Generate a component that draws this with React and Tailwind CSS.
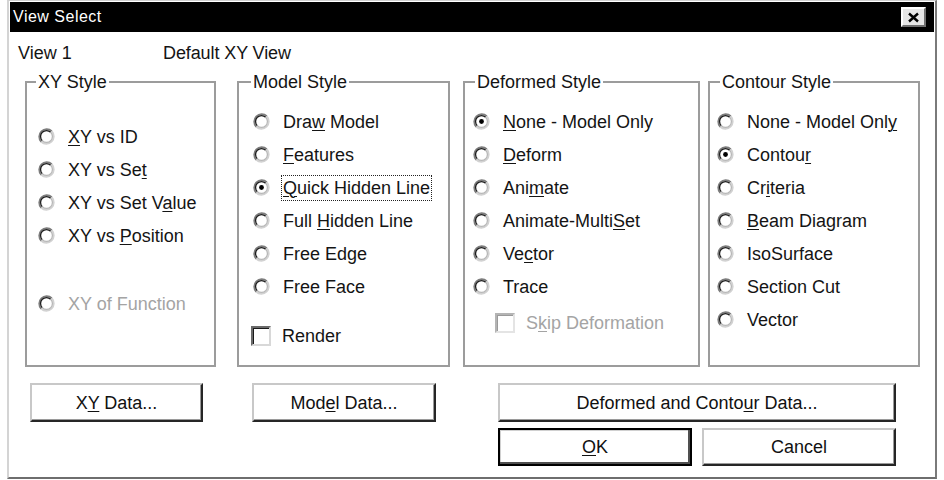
import React from "react";

/* ---------- small pieces ---------- */

// "&" marks the mnemonic letter, drawn underlined
function Mn({ text }) {
  const i = text.indexOf("&");
  if (i < 0) return <span>{text}</span>;
  return (
    <span className="whitespace-pre">
      {text.slice(0, i)}
      <u className="underline-offset-[2px] decoration-1">{text[i + 1]}</u>
      {text.slice(i + 2)}
    </span>
  );
}

function Radio({ checked }) {
  return (
    <svg width="17" height="17" viewBox="0 0 17 17" className="shrink-0">
      <circle cx="8.5" cy="8.5" r="7.5" fill="#fff" />
      <path d="M3.2 13.8A7.5 7.5 0 0 1 13.8 3.2" fill="none" stroke="#7c7c7c" strokeWidth="1.7" />
      <path d="M13.8 3.2A7.5 7.5 0 0 1 3.2 13.8" fill="none" stroke="#d2d2d2" strokeWidth="1.7" />
      <path d="M4.3 12.7A5.9 5.9 0 0 1 12.7 4.3" fill="none" stroke="#1c1c1c" strokeWidth="1.3" />
      <path d="M12.7 4.3A5.9 5.9 0 0 1 4.3 12.7" fill="none" stroke="#b8b8b8" strokeWidth="1.3" />
      {checked && <circle cx="8.5" cy="8.5" r="2.4" fill="#000" />}
    </svg>
  );
}

function Check({ disabled }) {
  return (
    <div
      className={`w-[20px] h-[20px] shrink-0 bg-white border-2 ${
        disabled
          ? "border-t-[#b4b4b4] border-l-[#b4b4b4] border-r-[#e4e4e4] border-b-[#e4e4e4] shadow-[inset_1px_1px_0_#9a9a9a]"
          : "border-t-[#6a6a6a] border-l-[#6a6a6a] border-r-[#d8d8d8] border-b-[#d8d8d8] shadow-[inset_1px_1px_0_#1a1a1a]"
      }`}
    />
  );
}

function Btn({ children, cls, isDefault }) {
  return (
    <button
      className={`flex items-center justify-center bg-white text-[18px] leading-[20px] text-[#111] ${
        isDefault
          ? "border-2 border-black shadow-[inset_-2px_-2px_0_#505050,inset_1px_1px_0_#d0d0d0]"
          : "border-2 border-t-[#c8c8c8] border-l-[#c8c8c8] border-r-[#262626] border-b-[#262626] shadow-[inset_-1px_-1px_0_#9a9a9a]"
      } ${cls}`}
    >
      {children}
    </button>
  );
}

/* ---------- option groups ---------- */

const groups = [
  {
    title: "XY Style",
    box: "ml-[15px] w-[191px]",
    legend: "ml-[9px]",
    inner: "pl-[11px] pt-[28px]",
    items: [
      { kind: "radio", label: "&XY vs ID" },
      { kind: "radio", label: "XY vs Se&t" },
      { kind: "radio", label: "XY vs Set V&alue" },
      { kind: "radio", label: "XY vs &Position" },
      { kind: "radio", label: "XY of Function", disabled: true, row: "mt-[35px]" },
    ],
  },
  {
    title: "Model Style",
    box: "ml-[21px] w-[213px]",
    legend: "ml-[12px]",
    inner: "pl-[14px] pt-[13px]",
    items: [
      { kind: "radio", label: "Dra&w Model" },
      { kind: "radio", label: "&Features" },
      { kind: "radio", label: "&Quick Hidden Line", checked: true, focus: true },
      { kind: "radio", label: "Full &Hidden Line" },
      { kind: "radio", label: "Free Edge" },
      { kind: "radio", label: "Free Face" },
      { kind: "check", label: "Render", row: "mt-[16px] -ml-[2px]" },
    ],
  },
  {
    title: "Deformed Style",
    box: "ml-[13px] w-[237px]",
    legend: "ml-[10px]",
    inner: "pl-[8px] pt-[13px]",
    items: [
      { kind: "radio", label: "&None - Model Only", checked: true },
      { kind: "radio", label: "&Deform" },
      { kind: "radio", label: "Ani&mate" },
      { kind: "radio", label: "Animate-Multi&Set" },
      { kind: "radio", label: "Ve&ctor" },
      { kind: "radio", label: "Trace" },
      { kind: "check", label: "S&kip Deformation", disabled: true, row: "mt-[3px] pl-[22px]" },
    ],
  },
  {
    title: "Contour Style",
    box: "ml-[8px] w-[212px]",
    legend: "ml-[10px]",
    inner: "pl-[7px] pt-[13px]",
    items: [
      { kind: "radio", label: "None - Model Onl&y" },
      { kind: "radio", label: "Contou&r", checked: true },
      { kind: "radio", label: "Cr&iteria" },
      { kind: "radio", label: "&Beam Diagram" },
      { kind: "radio", label: "IsoSurface" },
      { kind: "radio", label: "Section Cut" },
      { kind: "radio", label: "Vector" },
    ],
  },
];

function Row({ item }) {
  const text = item.disabled ? "text-[#a4a4a4]" : "text-[#141414]";
  return (
    <div className={`flex items-center h-[33px] ${item.row || ""}`}>
      {item.kind === "radio" ? <Radio checked={item.checked} /> : <Check disabled={item.disabled} />}
      {item.focus ? (
        <span className={`ml-[11px] border border-dotted border-[#222] px-[1px] py-[2px] ${text}`}>
          <Mn text={item.label} />
        </span>
      ) : (
        <span className={`${item.kind === "radio" ? "ml-[13px]" : "ml-[11px]"} ${text}`}>
          <Mn text={item.label} />
        </span>
      )}
    </div>
  );
}

export default function App() {
  return (
    <div className="w-[944px] h-[480px] bg-white font-['Liberation_Sans',Arial,sans-serif] text-[18px] leading-[20px] text-[#141414]">
      <div className="ml-[7px] w-[930px] h-[479px] flex flex-col border-t border-l-2 border-r-2 border-b-2 border-t-[#cfcfcf] border-l-[#d4d4d4] border-r-[#7a7a7a] border-b-[#6e6e6e] pt-[1px] px-[1px]">
        {/* title bar */}
        <div className="h-[30px] bg-black flex items-center justify-between pl-[3px] pr-[8px]">
          <span className="text-white text-[16px] tracking-[0.5px]">View Select</span>
          <div className="w-[25px] h-[20px] bg-[#e6e6e6] border-2 border-t-white border-l-white border-r-[#707070] border-b-[#707070] flex items-center justify-center">
            <svg width="13" height="11" viewBox="0 0 13 11">
              <path d="M2 1.5L11 9.5M11 1.5L2 9.5" stroke="#000" strokeWidth="2.4" />
            </svg>
          </div>
        </div>

        {/* current view */}
        <div className="flex mt-[11px] pl-[8px]">
          <span className="w-[145px]">View 1</span>
          <span className="tracking-[-0.1px]">Default XY View</span>
        </div>

        {/* style groups */}
        <div className="flex mt-[9px]">
          {groups.map((g) => (
            <fieldset
              key={g.title}
              className={`h-[295px] border-2 border-[#9c9c9c] ${g.box}`}
            >
              <legend className={`px-[2px] leading-[20px] text-[#141414] ${g.legend}`}>{g.title}</legend>
              <div className={g.inner}>
                {g.items.map((it) => (
                  <Row key={it.label} item={it} />
                ))}
              </div>
            </fieldset>
          ))}
        </div>

        {/* buttons */}
        <div className="flex mt-[16px]">
          <Btn cls="ml-[20px] w-[173px] h-[39px]">
            <Mn text="X&Y Data..." />
          </Btn>
          <Btn cls="ml-[49px] w-[184px] h-[39px]">
            <Mn text="Mod&el Data..." />
          </Btn>
          <div className="ml-[62px] w-[398px] flex flex-col gap-[6px]">
            <Btn cls="w-full h-[39px]">
              <Mn text="Deformed and Conto&ur Data..." />
            </Btn>
            <div className="flex justify-between">
              <Btn cls="w-[194px] h-[38px]" isDefault>
                <Mn text="&OK" />
              </Btn>
              <Btn cls="w-[194px] h-[38px]">Cancel</Btn>
            </div>
          </div>
        </div>
      </div>
    </div>
  );
}
